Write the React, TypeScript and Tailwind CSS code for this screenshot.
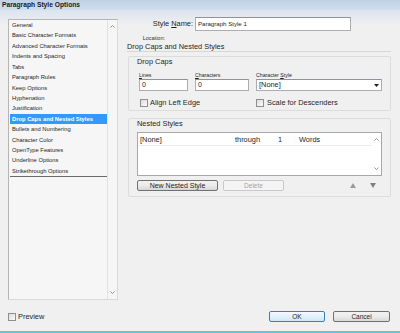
import React from "react";

const items = [
  "General",
  "Basic Character Formats",
  "Advanced Character Formats",
  "Indents and Spacing",
  "Tabs",
  "Paragraph Rules",
  "Keep Options",
  "Hyphenation",
  "Justification",
  "Drop Caps and Nested Styles",
  "Bullets and Numbering",
  "Character Color",
  "OpenType Features",
  "Underline Options",
  "Strikethrough Options",
];

function Caret({ down = false }: { down?: boolean }) {
  return (
    <svg width="5" height="3" viewBox="0 0 5 3" className="block">
      <path d={down ? "M0.5 0.5 L2.5 2.5 L4.5 0.5" : "M0.5 2.5 L2.5 0.5 L4.5 2.5"} fill="none" stroke="#8a8a8a" strokeWidth="0.9" />
    </svg>
  );
}

function Check() {
  return (
    <div className="w-[8px] h-[8px] border border-[#8e8f8f] bg-[linear-gradient(135deg,#dcdcdc,#fbfbfb)] shrink-0" />
  );
}

export default function App() {
  return (
    <div className="w-[400px] h-[333px] bg-[#f0f0f0] overflow-hidden flex flex-col text-[#1e1e1e] [font-family:'Liberation_Sans',Arial,sans-serif]">
      {/* title bar */}
      <div className="h-[10px] shrink-0 bg-[linear-gradient(to_bottom,#bfd1e7,#d0deee)] pl-[2px] text-[6.7px] font-bold leading-[10px] text-[#1b1b1b]">
        Paragraph Style Options
      </div>

      {/* body */}
      <div className="h-[290px] shrink-0 flex bg-[linear-gradient(to_bottom,#dbe4ef,#f0f0f0_16px)]">
        {/* left list */}
        <div className="pl-[8px] pt-[9px]">
          <div className="w-[110px] h-[281px] flex border border-[#b5b5b5] border-b-[#dadada] border-r-[#dadada] bg-[#f6f6f6]">
            <div className="flex-1 pl-[1px]">
              <div className="border-b border-[#6a6a6a]">
                {items.map((it) => {
                  const sel = it === "Drop Caps and Nested Styles";
                  return (
                    <div
                      key={it}
                      className={
                        "h-[10.43px] leading-[10.43px] pl-[2px] text-[5.8px] whitespace-nowrap " +
                        (sel ? "bg-[#3399ff] text-white font-bold" : "text-[#1e1e1e]")
                      }
                    >
                      {it}
                    </div>
                  );
                })}
              </div>
            </div>
            <div className="w-[10px] border-l border-[#e2e2e2] flex flex-col items-center justify-between pt-[5px] pb-[5px]">
              <Caret />
              <Caret down />
            </div>
          </div>
        </div>

        {/* right content */}
        <div className="ml-[9px] w-[264px] flex flex-col">
          <div className="mt-[7px] h-[14px] flex items-center">
            <div className="w-[66px] text-right text-[7.4px] leading-[14px]">
              Style <span className="underline">N</span>ame:
            </div>
            <div className="ml-[2px] w-[156px] h-[14px] bg-white border border-[#abadb3] border-t-[#8f9399] pl-[2px] text-[6.1px] leading-[12px]">
              Paragraph Style 1
            </div>
          </div>
          <div className="mt-[4px] h-[6px] w-[38px] text-right text-[5.5px] leading-[6px] text-[#333]">Location:</div>
          <div className="mt-[1px] h-[10px] border-b border-[#d6d6d6] text-[7.4px] leading-[9px]">
            Drop Caps and Nested Styles
          </div>

          {/* Drop Caps group */}
          <div className="mt-[4px] ml-[1px] w-[263px] h-[55px] border border-[#dcdcdc] rounded-[2px]">
            <div className="pl-[8px] h-[9px] text-[7.4px] leading-[9px]">Drop Caps</div>
            <div className="mt-[6px] pl-[10px] flex">
              <div className="w-[49px]">
                <div className="h-[6px] text-[5.2px] leading-[6px]">
                  <span className="underline">L</span>ines
                </div>
                <div className="mt-[1px] h-[12px] bg-white border border-[#abadb3] border-t-[#8f9399] pl-[2px] text-[7px] leading-[10px]">0</div>
              </div>
              <div className="ml-[7px] w-[54px]">
                <div className="h-[6px] text-[5.2px] leading-[6px]">
                  <span className="underline">C</span>haracters
                </div>
                <div className="mt-[1px] h-[12px] bg-white border border-[#abadb3] border-t-[#8f9399] pl-[2px] text-[7px] leading-[10px]">0</div>
              </div>
              <div className="ml-[7px] w-[126px]">
                <div className="h-[6px] text-[5.2px] leading-[6px]">
                  Character <span className="underline">S</span>tyle
                </div>
                <div className="mt-[1px] h-[12px] bg-white border border-[#abadb3] border-t-[#8f9399] pl-[2px] pr-[2px] flex items-center justify-between text-[7.4px] leading-[10px]">
                  <span>[None]</span>
                  <svg width="5" height="3" viewBox="0 0 5 3" className="block">
                    <path d="M0 0 L5 0 L2.5 3 Z" fill="#222" />
                  </svg>
                </div>
              </div>
            </div>
            <div className="mt-[7px] pl-[11px] h-[10px] flex items-center text-[7.4px]">
              <div className="w-[116px] flex items-center gap-[2px]">
                <Check />
                <span>Align Left Edge</span>
              </div>
              <div className="flex items-center gap-[3px]">
                <Check />
                <span>Scale for Descenders</span>
              </div>
            </div>
          </div>

          {/* Nested Styles group */}
          <div className="mt-[7px] ml-[1px] w-[263px] h-[79px] border border-[#dcdcdc] rounded-[2px]">
            <div className="pl-[8px] h-[9px] text-[7.4px] leading-[9px]">Nested Styles</div>
            <div className="mt-[4px] ml-[8px] w-[245px] h-[44px] bg-white border border-[#a8a8a8] flex">
              <div className="flex-1">
                <div className="h-[13px] border-b border-[#ececec] flex text-[7.4px] leading-[13px]">
                  <span className="ml-[2px] w-[95px]">[None]</span>
                  <span className="w-[43px]">through</span>
                  <span className="w-[21px]">1</span>
                  <span>Words</span>
                </div>
              </div>
              <div className="w-[9px] flex flex-col items-center justify-between pt-[5px] pb-[5px]">
                <Caret />
                <Caret down />
              </div>
            </div>
            <div className="mt-[4px] ml-[8px] h-[11px] flex items-center">
              <div className="w-[81px] h-[11px] border border-[#707070] rounded-[2px] bg-[linear-gradient(to_bottom,#f2f2f2,#ebebeb_50%,#d6d6d6)] text-center text-[7px] leading-[9px]">
                New Nested Style
              </div>
              <div className="ml-[5px] w-[61px] h-[11px] border border-[#c9c9c9] rounded-[2px] bg-[#f4f4f4] text-center text-[6.5px] leading-[9px] text-[#a3a3a3]">
                Delete
              </div>
              <div className="ml-[66px] flex items-center gap-[14px]">
                <svg width="6" height="5" viewBox="0 0 6 5" className="block">
                  <path d="M3 0 L6 5 L0 5 Z" fill="#9a9a9a" />
                </svg>
                <svg width="6" height="5" viewBox="0 0 6 5" className="block">
                  <path d="M0 0 L6 0 L3 5 Z" fill="#808080" />
                </svg>
              </div>
            </div>
          </div>
        </div>
      </div>

      {/* footer */}
      <div className="h-[31px] shrink-0 pt-[11px]">
        <div className="h-[11px] flex items-center">
          <div className="ml-[8px] flex items-center gap-[2px] w-[261px]">
            <Check />
            <span className="text-[7.4px]">Preview</span>
          </div>
          <div className="w-[56px] h-[11px] border border-[#3c7fb1] rounded-[2px] bg-[linear-gradient(to_bottom,#f4fafe,#e3f1fb_50%,#cfe7f8)] text-center text-[6.5px] leading-[9px]">
            OK
          </div>
          <div className="ml-[8px] w-[57px] h-[11px] border border-[#707070] rounded-[2px] bg-[linear-gradient(to_bottom,#f2f2f2,#ebebeb_50%,#d8d8d8)] text-center text-[6.5px] leading-[9px]">
            Cancel
          </div>
        </div>
      </div>
      <div className="h-[2px] shrink-0 bg-[#5ac6df]" />
    </div>
  );
}
